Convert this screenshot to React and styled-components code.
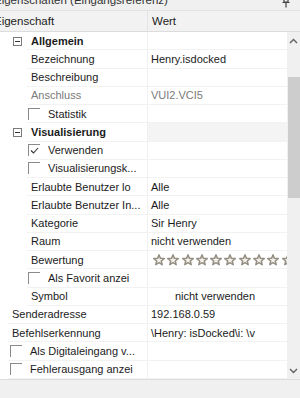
import styled, { createGlobalStyle } from "styled-components"

const GlobalStyle = createGlobalStyle`
  html, body {
    margin: 0;
    padding: 0;
    background: #ffffff;
    overflow: hidden;
  }
`

const NAME_COL = 158

const rows = [
  { cat: true, label: "Allgemein" },
  { level: 1, label: "Bezeichnung", value: "Henry.isdocked" },
  { level: 1, label: "Beschreibung", value: "" },
  { level: 1, label: "Anschluss", value: "VUI2.VCI5", disabled: true },
  { level: 1, label: "Statistik", check: false },
  { cat: true, label: "Visualisierung", hover: true },
  { level: 1, label: "Verwenden", check: true },
  { level: 1, label: "Visualisierungsk...", check: false },
  { level: 1, label: "Erlaubte Benutzer lo", value: "Alle" },
  { level: 1, label: "Erlaubte Benutzer In...", value: "Alle" },
  { level: 1, label: "Kategorie", value: "Sir Henry" },
  { level: 1, label: "Raum", value: "nicht verwenden" },
  { level: 1, label: "Bewertung", stars: 10 },
  { level: 1, label: "Als Favorit anzei", check: false },
  { level: 1, label: "Symbol", value: "nicht verwenden", center: true },
  { level: 0, label: "Senderadresse", value: "192.168.0.59" },
  { level: 0, label: "Befehlserkennung", value: "\\Henry: isDocked\\i: \\v" },
  { level: 0, label: "Als Digitaleingang v...", check: false },
  { level: 0, label: "Fehlerausgang anzei", check: false },
]

const indentFor = (row) => (row.cat || row.level === 1 ? 37 : 18)

const Panel = styled.div`
  width: 310px;
  height: 408px;
  margin: -10px 0 0 -10px;
  display: flex;
  flex-direction: column;
  font-family: "Segoe UI", "Liberation Sans", Arial, sans-serif;
  font-size: 11px;
  color: #1b1b1b;
  background: #f0f0f0;
`

const TitleBar = styled.div`
  height: 20px;
  flex: none;
  display: flex;
  align-items: center;
  justify-content: space-between;
  padding: 0 10px 0 4px;
  border-bottom: 1px solid #e2e2e2;
  color: #333;
  font-size: 11.5px;
`

const Pin = styled.svg`
  margin-top: 4px;
`

const Header = styled.div`
  height: 20px;
  flex: none;
  display: flex;
  border-bottom: 1px solid #dcdcdc;
  background: #f2f2f2;
  font-size: 11.5px;
`

const HeaderCell = styled.div`
  display: flex;
  align-items: center;
  box-sizing: border-box;
  width: ${(p) => (p.$w ? `${p.$w}px` : "auto")};
  flex: ${(p) => (p.$w ? "none" : "1")};
  padding-left: ${(p) => p.$pad}px;
  border-right: ${(p) => (p.$w ? "1px solid #e4e4e4" : "none")};
`

const Body = styled.div`
  height: 347px;
  flex: none;
  display: flex;
  background: #ffffff;
`

const List = styled.div`
  flex: 1;
  overflow: hidden;
`

const Row = styled.div`
  display: flex;
  height: 18.25px;
`

const Indent = styled.div`
  width: ${(p) => p.$w}px;
  flex: none;
  display: flex;
  align-items: center;
`

const Expander = styled.span`
  width: 9px;
  height: 9px;
  margin-left: 23px;
  box-sizing: border-box;
  border: 1px solid #7a7a7a;
  display: flex;
  align-items: center;
  justify-content: center;

  &::after {
    content: "";
    width: 5px;
    height: 1px;
    background: #333;
  }
`

const NameCell = styled.div`
  width: ${(p) => p.$w}px;
  flex: none;
  box-sizing: border-box;
  display: flex;
  align-items: center;
  gap: 8px;
  padding-left: ${(p) => p.$pad}px;
  border-bottom: 1px solid #f2f2f2;
  border-right: 1px solid #f0f0f0;
  white-space: nowrap;
  overflow: hidden;
  font-weight: ${(p) => (p.$bold ? 700 : 400)};
  color: ${(p) => (p.$disabled ? "#7a7a7a" : "#1b1b1b")};
`

const ValueCell = styled.div`
  flex: 1;
  min-width: 0;
  box-sizing: border-box;
  display: flex;
  align-items: center;
  justify-content: ${(p) => (p.$center ? "center" : "flex-start")};
  gap: 2.3px;
  padding-left: ${(p) => p.$pad}px;
  padding-right: ${(p) => (p.$center ? 8 : 0)}px;
  border-bottom: 1px solid #f2f2f2;
  background: ${(p) => (p.$hover ? "#f4f4f4" : "transparent")};
  white-space: nowrap;
  overflow: hidden;
  color: ${(p) => (p.$disabled ? "#7a7a7a" : "#1b1b1b")};
`

const Check = styled.span`
  width: 12px;
  height: 12px;
  flex: none;
  box-sizing: border-box;
  border-top: 1px solid #8a8a8a;
  border-left: 1px solid #8a8a8a;
  display: flex;
  align-items: center;
  justify-content: center;
`

const Star = styled.svg`
  flex: none;
`

const Scrollbar = styled.div`
  width: 13px;
  flex: none;
  display: flex;
  flex-direction: column;
  background: #f0f0f0;
`

const Arrow = styled.div`
  height: 17px;
  flex: none;
  display: flex;
  align-items: center;
  justify-content: center;
`

const Track = styled.div`
  flex: 1;
  padding-top: 28px;
`

const Thumb = styled.div`
  height: 121px;
  margin-left: 1px;
  background: #cdcdcd;
`

const Footer = styled.div`
  flex: 1;
  border-top: 1px solid #dddddd;
  background: #f0f0f0;
`

const StarIcon = () => (
  <Star width="12" height="12" viewBox="0 0 12 12">
    <polygon
      points="6,0.9 7.41,4.36 11.2,4.6 8.28,7.04 9.2,10.7 6,8.7 2.8,10.7 3.72,7.04 0.8,4.6 4.59,4.36"
      fill="#f3f0ea"
      stroke="#958f83"
      strokeWidth="1.5"
      strokeLinejoin="round"
    />
  </Star>
)

const Checkbox = ({ checked }) => (
  <Check>
    {checked && (
      <svg width="9" height="9" viewBox="0 0 9 9">
        <polyline points="1,4.5 3.5,7 8,2" fill="none" stroke="#333" strokeWidth="1.1" />
      </svg>
    )}
  </Check>
)

const Chevron = ({ up }) => (
  <svg width="9" height="6" viewBox="0 0 9 6">
    <polyline
      points={up ? "1,5 4.5,1.5 8,5" : "1,1 4.5,4.5 8,1"}
      fill="none"
      stroke="#606060"
      strokeWidth="1.4"
    />
  </svg>
)

const PropertyRow = ({ row }) => {
  const indent = indentFor(row)
  const hasCheck = row.check !== undefined
  return (
    <Row>
      <Indent $w={indent}>{row.cat && <Expander />}</Indent>
      <NameCell
        $w={NAME_COL - indent}
        $pad={hasCheck ? (row.level === 1 ? 1 : 2) : 4}
        $bold={row.cat}
        $disabled={row.disabled}
      >
        {hasCheck && <Checkbox checked={row.check} />}
        {row.label}
      </NameCell>
      <ValueCell
        $pad={row.stars ? 5 : 3}
        $center={row.center}
        $hover={row.hover}
        $disabled={row.disabled}
      >
        {row.stars
          ? Array.from({ length: row.stars }, (_, i) => <StarIcon key={i} />)
          : row.value}
      </ValueCell>
    </Row>
  )
}

const App = () => {
  return (
    <>
      <GlobalStyle />
      <Panel>
        <TitleBar>
          <span>Eigenschaften (Eingangsreferenz)</span>
          <Pin width="8" height="12" viewBox="0 0 8 12">
            <path d="M2 1h4v5H2z M0.5 6.5h7 M4 6.5v5" fill="none" stroke="#444" strokeWidth="1.2" />
          </Pin>
        </TitleBar>
        <Header>
          <HeaderCell $w={NAME_COL} $pad={4}>
            Eigenschaft
          </HeaderCell>
          <HeaderCell $pad={4}>Wert</HeaderCell>
        </Header>
        <Body>
          <List>
            {rows.map((row, i) => (
              <PropertyRow key={i} row={row} />
            ))}
          </List>
          <Scrollbar>
            <Arrow>
              <Chevron up />
            </Arrow>
            <Track>
              <Thumb />
            </Track>
            <Arrow>
              <Chevron />
            </Arrow>
          </Scrollbar>
        </Body>
        <Footer />
      </Panel>
    </>
  )
}

export default App
